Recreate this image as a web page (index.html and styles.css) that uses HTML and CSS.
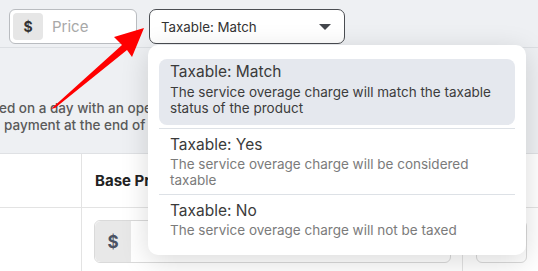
FILE: index.html
```html
<!DOCTYPE html>
<html lang="en">
<head>
  <meta charset="UTF-8" />
  <meta name="viewport" content="width=device-width, initial-scale=1.0"/>
  <title>Service Overage</title>
  <link rel="stylesheet" href="styles.css">
</head>
<body>
  <div class="toolbar">
    <div class="price-input">
      <span class="addon">$</span>
      <span class="placeholder">Price</span>
    </div>
    <div class="select-wrap">
      <div class="select">
        <span>Taxable: Match</span>
        <span class="caret"></span>
      </div>
      <ul class="dropdown">
        <li class="option active">
          <div class="opt-title">Taxable: Match</div>
          <div class="opt-desc">The service overage charge will match the taxable status of the product</div>
        </li>
        <li class="sep"></li>
        <li class="option">
          <div class="opt-title">Taxable: Yes</div>
          <div class="opt-desc">The service overage charge will be considered taxable</div>
        </li>
        <li class="sep"></li>
        <li class="option">
          <div class="opt-title">Taxable: No</div>
          <div class="opt-desc">The service overage charge will not be taxed</div>
        </li>
      </ul>
    </div>
  </div>

  <div class="notice">
    <p class="line1">ed on a day with an open balance will be charged</p>
    <p class="line2">payment at the end of the billing period.</p>
  </div>

  <div class="table">
    <div class="cell head"></div>
    <div class="cell head title">Base Price</div>
    <div class="cell head"></div>
    <div class="cell"></div>
    <div class="cell">
      <div class="money">
        <span class="addon big">$</span>
      </div>
    </div>
    <div class="cell">
      <div class="money short"></div>
    </div>
  </div>

  <svg class="arrow" width="150" height="115" viewBox="0 0 150 115">
    <polygon points="51,109 122,45 114,37 144,28 132,57 127,50 55,108" fill="#ff0000"/>
  </svg>
</body>
</html>
```

FILE: styles.css
```css
body {
  margin: 0;
  font-family: Inter, "Noto Sans", sans-serif;
  background: #ffffff;
  color: #333;
  width: 538px;
  height: 271px;
  overflow: hidden;
  position: relative;
}
.toolbar {
  background: #eef0f3;
  height: 48px;
  box-sizing: border-box;
  padding: 9px 9px 0;
  display: flex;
  gap: 12px;
  border-bottom: 1px solid #dcdfe3;
}
.price-input {
  width: 128px;
  height: 35px;
  box-sizing: border-box;
  background: #fff;
  border: 1px solid #b9bcc0;
  border-radius: 6px;
  display: flex;
  align-items: center;
  padding: 3px;
  gap: 9px;
}
.addon {
  width: 30px;
  align-self: stretch;
  background: #e6e6e6;
  border-radius: 4px;
  display: flex;
  align-items: center;
  justify-content: center;
  font-weight: 700;
  font-size: 14px;
  color: #333;
}
.placeholder {
  color: #a8a8a8;
  font-size: 15px;
}
.select-wrap {
  position: relative;
}
.select {
  width: 196px;
  height: 35px;
  box-sizing: border-box;
  border: 1.5px solid #4a4d52;
  border-radius: 7px;
  background: #fff;
  display: flex;
  align-items: center;
  justify-content: space-between;
  padding: 0 13px 0 11px;
  font-size: 13.3px;
  color: #333;
}
.caret {
  width: 0;
  height: 0;
  border-left: 6px solid transparent;
  border-right: 6px solid transparent;
  border-top: 6px solid #44474c;
}
.dropdown {
  position: absolute;
  top: 36px;
  left: -1px;
  width: 378px;
  margin: 0;
  padding: 14px 11px 14px;
  box-sizing: border-box;
  list-style: none;
  background: #fff;
  border-radius: 10px;
  box-shadow: 0 6px 28px rgba(0, 0, 0, 0.15);
  z-index: 2;
}
.option {
  padding: 6px 11px 3px;
  border-radius: 8px;
}
.option.active {
  padding: 3px 11px 9px;
  background: #e5e8ee;
}
.sep {
  height: 1px;
  background: #dde1e6;
  margin-top: 3px;
}
.opt-title {
  font-size: 15.5px;
  line-height: 20px;
  color: #3a3a3a;
}
.opt-desc {
  font-size: 13.5px;
  line-height: 16px;
  margin-top: 1px;
  color: #7b7b7b;
}
.option.active .opt-desc {
  margin-top: 2px;
  color: #3c3c3c;
}
.notice {
  background: #eef0f3;
  height: 106px;
  box-sizing: border-box;
  padding-top: 52px;
  border-bottom: 1px solid #dfe1e4;
  font-size: 13.5px;
  font-weight: 500;
  color: #5a5a5a;
}
.notice p {
  margin: 0;
  line-height: 17px;
  white-space: nowrap;
}
.line1 {
  margin-left: -1px !important;
}
.line2 {
  padding-left: 4px;
}
.table {
  display: grid;
  grid-template-columns: 82px 381px 1fr;
  grid-template-rows: 54px 64px;
}
.cell {
  border-right: 1px solid #e3e3e3;
  border-bottom: 1px solid #e3e3e3;
  box-sizing: border-box;
  padding: 12px 11px 0 12px;
}
.cell:nth-child(3n) {
  border-right: none;
}
.head {
  display: flex;
  align-items: center;
  padding-top: 0;
}
.title {
  font-weight: 700;
  font-size: 15px;
  color: #222;
  padding-left: 13px;
}
.money {
  height: 43px;
  box-sizing: border-box;
  border: 1px solid #dadada;
  border-radius: 6px;
  background: #fff;
  display: flex;
}
.money.short {
  margin-left: 1px;
}
.addon.big {
  width: 36px;
  border-radius: 6px 0 0 6px;
  background: #e8e8e8;
  color: #4b5263;
  font-size: 17px;
}
.arrow {
  position: absolute;
  left: 0;
  top: 0;
  z-index: 3;
}
```
